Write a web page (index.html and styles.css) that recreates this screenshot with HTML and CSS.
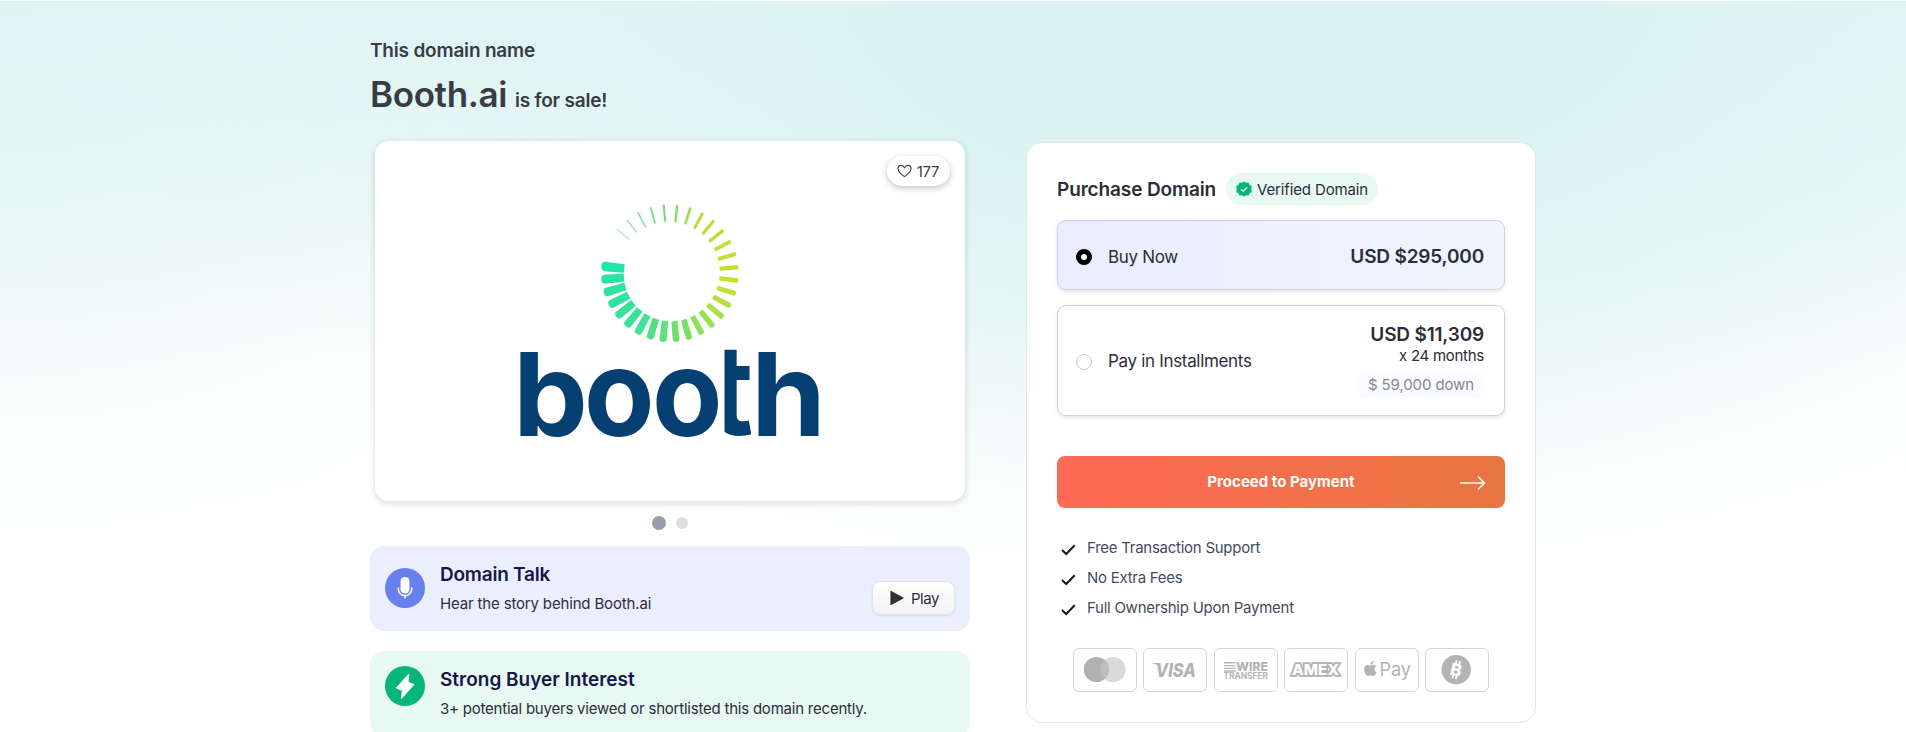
FILE: index.html
```html
<!DOCTYPE html>
<html lang="en">
<head>
<meta charset="utf-8">
<title>Booth.ai is for sale</title>
<link rel="stylesheet" href="styles.css">
</head>
<body>
<main class="page">
  <section class="left">
    <p class="eyebrow">This domain name</p>
    <h1 class="title"><span class="name">Booth.ai</span><span class="sale">is for sale!</span></h1>
    <div class="hero">
      <svg class="logo" width="320" height="250" viewBox="510 195 320 250">
        <defs><clipPath id="tee"><path d="M724.500 340h26.500v110h-26.500z"/></clipPath></defs>
        <g id="ring"></g>
        <g class="wordmark">
          <text x="513" y="436" textLength="75" lengthAdjust="spacingAndGlyphs">b</text>
          <text class="round" x="584" y="436" textLength="70.500" lengthAdjust="spacingAndGlyphs">o</text>
          <text class="round" x="652" y="436" textLength="70.500" lengthAdjust="spacingAndGlyphs">o</text>
          <text class="tee" x="707.500" y="435" clip-path="url(#tee)">t</text>
          <text x="751" y="436" textLength="75" lengthAdjust="spacingAndGlyphs">h</text>
        </g>
      </svg>
      <div class="likes">
        <svg width="15" height="14" viewBox="0 0 16 14"><path d="M8 13C4.800 10.600 1 7.900 1 4.600 1 2.500 2.500 1 4.400 1 6 1 7.300 1.900 8 3.400 8.700 1.900 10 1 11.600 1 13.500 1 15 2.500 15 4.600c0 3.300-3.800 6-7 8.400z" fill="none" stroke="#3b4049" stroke-width="1.200"/></svg>
        <span>177</span>
      </div>
    </div>
    <div class="dots"><i class="dot on"></i><i class="dot"></i></div>
    <div class="info talk">
      <svg class="badge" width="40" height="40" viewBox="0 0 40 40"><circle cx="20" cy="20" r="20" fill="#6680ee"/><rect x="15.500" y="9" width="9" height="16.500" rx="4.500" fill="#fff"/><path d="M13.300 19.500V21a6.700 6.700 0 0 0 13.400 0v-1.500M20 27.500v3" fill="none" stroke="#fff" stroke-width="1.500"/></svg>
      <div class="copy"><h2 class="t-talk">Domain Talk</h2><p class="t-hear">Hear the story behind Booth.ai</p></div>
      <button class="play"><svg width="14" height="16" viewBox="0 0 14 16"><path d="M1 1.500v13L13 8z" fill="#2f302f" stroke="#2f302f" stroke-width="1.200" stroke-linejoin="round"/></svg>Play</button>
    </div>
    <div class="info buyers">
      <svg class="badge" width="40" height="40" viewBox="0 0 40 40"><circle cx="20" cy="20" r="20" fill="#04b57c"/><path d="M23.800 8 11.300 22l6 2.300L16.500 32.500 29 18.500l-6-2.300z" fill="#fff" stroke="#fff" stroke-width="1" stroke-linejoin="round"/></svg>
      <div class="copy"><h2>Strong Buyer Interest</h2><p class="t-viewed">3+ potential buyers viewed or shortlisted this domain recently.</p></div>
    </div>
  </section>
  <aside class="card">
    <div class="head">
      <h3>Purchase Domain</h3>
      <span class="chip"><svg width="16" height="16" viewBox="0 0 16 16"><path d="M8 .2l2 1.500 2.500-.2 1 2.300 2.200 1.200-.4 3 .4 3-2.200 1.200-1 2.300-2.500-.2L8 15.800l-2-1.500-2.500.2-1-2.300L.3 11l.4-3L.3 5l2.200-1.200 1-2.300 2.500.2z" fill="#04b57c"/><path d="M5 8.200l2.100 2.100 3.900-4" fill="none" stroke="#fff" stroke-width="1.200"/></svg>Verified Domain</span>
    </div>
    <div class="option picked"><i class="radio on"></i><span class="label">Buy Now</span><b class="price">USD $295,000</b></div>
    <div class="option plan"><i class="radio"></i><span class="label">Pay in Installments</span>
      <div class="terms"><b class="price">USD $11,309</b><span class="months">x 24 months</span><span class="down">$ 59,000 down</span></div>
    </div>
    <button class="pay"><span>Proceed to Payment</span><svg class="arrow" width="26" height="16" viewBox="0 0 26 16"><path d="M0 8h24.500M18 1.500 24.500 8 18 14.500" fill="none" stroke="#fff" stroke-width="1.500"/></svg></button>
    <ul class="perks">
      <li><svg width="15" height="12" viewBox="0 0 15 12"><path d="M1 6l4.200 4L13.700 1.200" fill="none" stroke="#111827" stroke-width="2"/></svg>Free Transaction Support</li>
      <li><svg width="15" height="12" viewBox="0 0 15 12"><path d="M1 6l4.200 4L13.700 1.200" fill="none" stroke="#111827" stroke-width="2"/></svg>No Extra Fees</li>
      <li><svg width="15" height="12" viewBox="0 0 15 12"><path d="M1 6l4.200 4L13.700 1.200" fill="none" stroke="#111827" stroke-width="2"/></svg>Full Ownership Upon Payment</li>
    </ul>
    <div class="methods">
      <svg class="method" viewBox="1 1 62 42"><circle cx="40" cy="21.500" r="12.600" fill="#d9d9d9"/><circle cx="23.400" cy="21.500" r="12.600" fill="#b1b1b1"/><path d="M31.700 12a12.600 12.600 0 0 1 0 19 12.600 12.600 0 0 1 0-19z" fill="#bebebe"/></svg>
      <svg class="method" viewBox="1 1 62 42"><path d="M9.500 15h6l2 5c-2-2.500-4.500-4-8-4.600z" fill="#b3b3b3"/><text class="visa" x="12.500" y="28.700" textLength="40.500" lengthAdjust="spacingAndGlyphs">VISA</text></svg>
      <svg class="method" viewBox="1 1 62 42"><path d="M10 14.800h11.500M10 17.600h11.500M10 20.400h11.500M10 23h11.500" stroke="#b3b3b3" stroke-width="1.400"/><text class="wire" x="22" y="23.300" textLength="32" lengthAdjust="spacingAndGlyphs">WIRE</text><text class="transfer" x="9.500" y="31" textLength="44.500" lengthAdjust="spacingAndGlyphs">TRANSFER</text></svg>
      <svg class="method" viewBox="1 1 62 42"><text class="amex" x="8" y="27.200" textLength="47" lengthAdjust="spacingAndGlyphs">AMEX</text></svg>
      <svg class="method" viewBox="1 1 62 42"><path d="M18.600 13c.2 1.800-1.300 3.500-3.200 3.500-.2-1.700 1.400-3.400 3.200-3.500zM15.400 17.600c.8 0 1.600-.8 3-.8 1 0 2 .5 2.700 1.400-2.400 1.500-2 4.900.5 6-.7 1.700-1.800 3.800-3.300 3.800-1 0-1.400-.6-2.600-.6s-1.600.6-2.600.6c-1.900 0-4-3.600-4-6.500 0-2.800 1.700-4.600 3.700-4.600 1.200 0 2 .7 2.600.7z" fill="#b3b3b3"/><text class="apple" x="24.500" y="28" textLength="31.500" lengthAdjust="spacingAndGlyphs">Pay</text></svg>
      <svg class="method" viewBox="1 1 62 42"><circle cx="31.200" cy="21.700" r="14.700" fill="#b3b3b3"/><g transform="rotate(13 31.200 21.700)"><path d="M29.500 12.500v4M33 12.500v4M29.500 27v4M33 27v4" stroke="#fff" stroke-width="1.800"/><text class="coin" x="25.500" y="28">B</text></g></svg>
    </div>
  </aside>
</main>
<script src="ring.js"></script>
</body>
</html>
```
FILE: styles.css
```css
*{box-sizing:border-box}
body{margin:0;height:732px;overflow:hidden;font-family:Inter,"Noto Sans",sans-serif;color:#2b2e38;border-top:1px solid #fff;
  background:
    radial-gradient(ellipse 1150px 600px at 1250px 0,#daf3f1 0 30%,#daf3f180 66%,#daf3f11c 85%,#daf3f100 100%) no-repeat,
    radial-gradient(ellipse 800px 590px at 0 0,#daf3f1b0 0,#daf3f170 45%,#daf3f118 75%,#daf3f100 100%) no-repeat,
    linear-gradient(#daf3f1a0 0,#daf3f100 360px) no-repeat #fff}
h1,h2,h3,p,ul{margin:0;padding:0}
.page{display:flex;justify-content:space-between;width:1166px;margin:0 auto}
.left{width:600px;padding-top:38px}
.eyebrow{font-size:19px;font-weight:600;line-height:24px;letter-spacing:-.19px;color:#383c47}
.title{display:flex;align-items:baseline;gap:8px;height:42px;margin:10px 0 26px;line-height:42px;color:#383c47}
.name{font-size:35px;font-weight:600;letter-spacing:-.37px}
.sale{font-size:19px;font-weight:600;letter-spacing:-.22px}
.hero{position:relative;height:360px;margin:0 5px;padding:54px 135px;border-radius:14px;background:#fff;box-shadow:0 2px 7px rgba(0,0,0,.16)}
.logo{display:block}
.wordmark{font-size:115px;font-weight:700;fill:#063f72}
.wordmark .round{font-size:121px}
.wordmark .tee{font-size:126px}
.likes{position:absolute;top:15px;right:15px;display:flex;align-items:center;gap:5px;height:30px;padding:0 11px 0 10px;border-radius:15px;background:#fff;box-shadow:0 2px 6px rgba(0,0,0,.25);font-size:15px;letter-spacing:-.4px;color:#3b4049}
.dots{display:flex;justify-content:center;align-items:center;gap:10px;height:14px;margin:15px 0 16px}
.dot{width:12px;height:12px;border-radius:50%;background:#dcdee3}
.dot.on{width:14px;height:14px;background:#989eaa}
.info{display:flex;align-items:flex-start;height:85px;padding:0 15px;border-radius:14px}
.talk{background:#ebeeff}
.buyers{margin-top:20px;background:#e8f8f3}
.badge{flex:none;margin:22px 15px 0 0}
.buyers .badge{margin-top:15px}
.copy{flex:1;padding-top:17px}
h2{font-size:19px;font-weight:600;line-height:24px;color:#16164b}
.t-talk{letter-spacing:-.23px}
.copy p{margin-top:7px;font-size:15px;line-height:20px;letter-spacing:-.22px}
.copy .t-hear{letter-spacing:-.16px}
.play{display:flex;align-items:center;justify-content:center;gap:7px;width:83px;height:34px;margin-top:35px;padding:0 0 0 2px;border:1px solid #e1e2ea;border-radius:8px;background:linear-gradient(#fff,#f3f3f4);box-shadow:0 1px 2px rgba(0,0,0,.1);font:15px Inter,sans-serif;letter-spacing:-.46px;color:#2b2e38}
.card{width:510px;height:581px;margin-top:141px;padding:30px;border:1px solid #e4e6e8;border-radius:16px;background:#fff}
.head{display:flex;align-items:center;gap:10px;height:32px}
h3{font-size:19px;font-weight:600;letter-spacing:-.13px}
.chip{display:flex;align-items:center;gap:5px;height:32px;padding:0 10px;border-radius:16px;background:#e8f8f3;font-size:15px;letter-spacing:-.14px}
.option{display:flex;align-items:center;height:70px;margin-top:15px;padding:0 20px 0 18px;border:1px solid #cdd1e0;border-radius:9px;background:#fff;box-shadow:0 2px 4px rgba(0,0,0,.1)}
.option.picked{padding-top:3px;background:linear-gradient(90deg,#e9eefe,#eff6ff)}
.radio{width:16px;height:16px;margin:3px 16px 0 0;border:1px solid #c9c9c9;border-radius:50%;background:#fff}
.radio.on{margin-top:0;border:5px solid #000}
.label{flex:1;font-size:17px;letter-spacing:-.32px}
.price{font-size:19px;font-weight:600;line-height:24px;letter-spacing:-.18px}
.option.plan{height:111px}
.terms{display:flex;flex-direction:column;align-items:flex-end}
.months{margin-top:-1px;font-size:15px;line-height:20px;letter-spacing:-.27px}
.down{margin-top:5px;padding:0 10px;border-radius:8px;background:#fafbff;font-size:15px;line-height:28px;letter-spacing:-.11px;color:#86888b}
.pay{position:relative;display:block;width:100%;height:52px;margin-top:40px;padding:0 0 2px;border:0;border-radius:8px;background:linear-gradient(90deg,#ff6a55,#e87541);color:#fff;font:700 15px Inter,sans-serif;letter-spacing:.02px}
.arrow{position:absolute;right:19px;top:19px}
.perks{margin-top:25px;list-style:none;font-size:15px;line-height:30px;letter-spacing:-.26px;color:#434c5c}
.perks li{display:flex;align-items:center;gap:11px;padding-left:4px}
.perks svg{margin-top:4px}
.methods{display:flex;justify-content:center;gap:6.400px;margin-top:25px}
.method{width:64px;height:44px;border:1px solid #d4d5da;border-radius:6px}
.method text{fill:#b3b3b3;font-weight:700}
.method .visa{font-size:19px;font-style:italic;font-weight:800}
.method .wire{font-size:12px;font-weight:800}
.method .transfer{font-size:8.500px}
.method .amex{font-size:14px;font-weight:800;fill:#fff;stroke:#b3b3b3;stroke-width:3.600px;paint-order:stroke;stroke-linejoin:miter}
.method .apple{font-size:18.500px;font-weight:400}
.method .coin{font-size:17px;font-weight:800;fill:#fff}
```
FILE: ring.js
```js
// Thirty bars, sweeping counter-clockwise from the left and thinning as they go.
const stops = [[0, 34, 228, 170], [6, 62, 226, 146], [9, 110, 224, 110], [13, 170, 225, 75], [16, 196, 227, 42], [22, 180, 222, 66], [25, 120, 216, 120], [29, 140, 222, 190]];
const ring = document.getElementById('ring');
for (let i = 0; i < 30; i++) {
  const angle = 186 - 11.25 * i;
  const k = stops.findIndex(s => s[0] >= i);
  const b = stops[k], a = stops[Math.max(0, k - 1)];
  const f = k ? (i - a[0]) / (b[0] - a[0]) : 0;
  const color = [1, 2, 3].map(c => Math.round(a[c] + (b[c] - a[c]) * f));
  const h = (9.4 - 8.4 * i / 29) / 2, n = h * .9, inner = 46 + 6.5 * i / 29;
  const r = h * .8;
  const bar = document.createElementNS('http://www.w3.org/2000/svg', 'path');
  bar.setAttribute('d', `M${inner} ${-n}L${69 - r} ${-h}Q69 ${-h} 69 0Q69 ${h} ${69 - r} ${h}L${inner} ${n}Z`);
  bar.setAttribute('transform', `translate(670 273.3) rotate(${angle})`);
  bar.setAttribute('fill', `rgb(${color})`);
  ring.appendChild(bar);
}
```
